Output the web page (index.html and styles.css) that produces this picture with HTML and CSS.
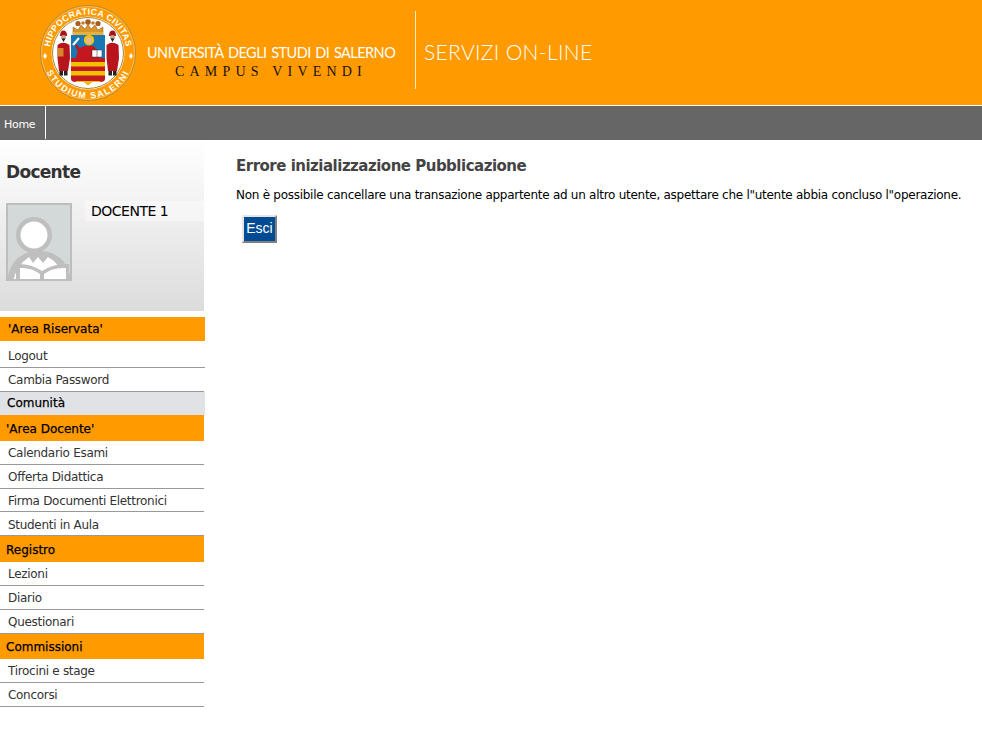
FILE: index.html
```html
<!DOCTYPE html>
<html lang="it">
<head>
<meta charset="utf-8">
<title>Errore inizializzazione Pubblicazione</title>
<link rel="stylesheet" href="styles.css">
</head>
<body>
<header class="top">
  <svg class="seal" viewBox="0 0 100 100" width="100" height="100" aria-label="Sigillo">
    <defs>
      <path id="arcTop" d="M11.710 54 A38.500 38.500 0 1 1 88.290 54"/>
      <path id="arcBot" d="M4.780 55 A45.500 45.500 0 0 0 95.220 55"/>
    </defs>
    <circle cx="50" cy="50" r="47.500" fill="#ff9a00" stroke="#b08a40" stroke-width="1"/>
    <circle cx="50" cy="50" r="46.500" fill="none" stroke="#ffd68a" stroke-width=".6"/>
    <circle cx="50" cy="50" r="36.500" fill="#fff"/>
    <circle cx="50" cy="50" r="35.500" fill="#fff" stroke="#a8842c" stroke-width="1"/>
    <text class="sealtext"><textPath href="#arcTop" startOffset="50%" text-anchor="middle">HIPPOCRATICA CIVITAS</textPath></text>
    <text class="sealtext sealbot"><textPath href="#arcBot" startOffset="50%" text-anchor="middle">STUDIUM SALERNI</textPath></text>
    <path d="M7 50 L9 53 L7 56 L5 53 Z M93 50 L95 53 L93 56 L91 53 Z" fill="#fff"/>
    <!-- crown -->
    <path d="M35 32 L35 24 L40 27 L43 22 L47 26 L50 21 L53 26 L57 22 L60 27 L65 24 L65 32 Z" fill="#d8962a" stroke="#8a5a10" stroke-width=".5"/>
    <circle cx="40" cy="20.500" r="2.600" fill="#a85c20"/>
    <circle cx="50" cy="19" r="2.800" fill="#a85c20"/>
    <circle cx="60" cy="20.500" r="2.600" fill="#a85c20"/>
    <circle cx="45" cy="20" r="1.800" fill="#c47a28"/>
    <circle cx="55" cy="20" r="1.800" fill="#c47a28"/>
    <rect x="35" y="29" width="30" height="3" fill="#e8b040"/>
    <!-- shield -->
    <path d="M33 32 H67 V76 Q67 79 62 79 H54 L50 82 L46 79 H38 Q33 79 33 76 Z" fill="#c3181f"/>
    <rect x="33" y="32" width="34" height="23" fill="#1878b4"/>
    <rect x="33" y="59" width="34" height="4.500" fill="#f2c200"/>
    <rect x="33" y="68" width="34" height="4.500" fill="#f2c200"/>
    <path d="M38 79 H46 L50 82 L54 79 H62 L62 78 H38 Z" fill="#f2c200"/>
    <!-- saint -->
    <circle cx="51" cy="37" r="5.200" fill="#f2c200"/>
    <circle cx="51" cy="37.500" r="3.300" fill="#e8b890"/>
    <path d="M38 55 L40 46 L46 43 H56 L59 47 L62 55 Z" fill="#c3181f"/>
    <path d="M41 47 L38 42" stroke="#c3181f" stroke-width="2.600"/>
    <path d="M35 42 L41 35" stroke="#fff" stroke-width="2"/>
    <path d="M54 47 H64 V54 H54 Z" fill="#fff" stroke="#333" stroke-width=".5"/>
    <path d="M59 47 V54" stroke="#333" stroke-width=".5"/>
    <!-- left figure -->
    <path d="M22 33 Q22 27.500 25.500 27.500 Q29 27.500 29 33 Z" fill="#a8141c"/>
    <circle cx="25.500" cy="34.500" r="2.400" fill="#caa080"/>
    <path d="M23.500 35.500 H27.500 L25.500 39 Z" fill="#222"/>
    <path d="M19.500 42 Q25 37.500 31.500 42 L32 55 L30 68 H21 L19.500 55 Z" fill="#b8141c"/>
    <rect x="21.500" y="68" width="3.500" height="4.500" fill="#222"/>
    <rect x="26" y="68" width="3.500" height="4.500" fill="#222"/>
    <rect x="20" y="45" width="5.500" height="8.500" fill="#d8862a"/>
    <!-- right figure -->
    <path d="M71 33 Q71 27.500 74.500 27.500 Q78 27.500 78 33 Z" fill="#a8141c"/>
    <circle cx="74.500" cy="34.500" r="2.400" fill="#caa080"/>
    <path d="M72.500 35.500 H76.500 L74.500 39 Z" fill="#222"/>
    <path d="M68.500 42 Q74 37.500 80.500 42 L81 55 L79 68 H70 L68.500 55 Z" fill="#b8141c"/>
    <rect x="70.500" y="68" width="3.500" height="4.500" fill="#222"/>
    <rect x="75" y="68" width="3.500" height="4.500" fill="#222"/>
  </svg>
  <div class="brand">
    <div class="uni">UNIVERSITÀ DEGLI STUDI DI SALERNO</div>
    <div class="motto">CAMPUS VIVENDI</div>
  </div>
  <div class="service">SERVIZI ON-LINE</div>
</header>
<nav class="navbar"><a class="navitem" href="#">Home</a></nav>
<div class="page">
  <aside class="side">
    <section class="profile">
      <h2 class="role">Docente</h2>
      <div class="person">
        <svg class="avatar" viewBox="0 0 66 78" width="66" height="78" aria-label="Avatar">
          <rect width="66" height="78" fill="#d3d9d9"/>
          <path d="M2 78 V72 Q6 56 20 50 Q33 45 46 50 Q60 56 64 72 V78 Z" fill="#bfbfbf"/>
          <path d="M7 78 Q11 62 23 54 L27 60 L32 54 L37 60 L42 54 Q54 60 59 78 Z" fill="#fff"/>
          <circle cx="28" cy="32" r="18" fill="#bfbfbf"/>
          <circle cx="28" cy="32" r="13.500" fill="#fff"/>
          <path d="M10 78 V61 Q24 60 36 68 Q48 60 63 61 V78 Z" fill="#bfbfbf"/>
          <path d="M14 78 V65 Q25 64 34 71 V78 Z M38 78 V71 Q47 64 60 65 V78 Z" fill="#fff"/>
        </svg>
        <div class="pname">DOCENTE 1</div>
      </div>
    </section>
    <div class="menu">
      <div class="head h-res">'Area Riservata'</div>
      <a class="item h-first" href="#">Logout</a>
      <a class="item" href="#">Cambia Password</a>
      <div class="sub">Comunità</div>
      <div class="head">'Area Docente'</div>
      <a class="item" href="#">Calendario Esami</a>
      <a class="item" href="#">Offerta Didattica</a>
      <a class="item h-short" href="#">Firma Documenti Elettronici</a>
      <a class="item h-low" href="#">Studenti in Aula</a>
      <div class="head">Registro</div>
      <a class="item" href="#">Lezioni</a>
      <a class="item" href="#">Diario</a>
      <a class="item" href="#">Questionari</a>
      <div class="head h-com">Commissioni</div>
      <a class="item" href="#">Tirocini e stage</a>
      <a class="item" href="#">Concorsi</a>
    </div>
  </aside>
  <main class="content">
    <h1 class="title">Errore inizializzazione Pubblicazione</h1>
    <p class="msg">Non è possibile cancellare una transazione appartente ad un altro utente, aspettare che l"utente abbia concluso l"operazione.</p>
    <button class="btn" type="button">Esci</button>
  </main>
</div>
</body>
</html>
```
FILE: styles.css
```css
* { box-sizing: border-box; }
html, body { margin: 0; padding: 0; }
body { width: 982px; height: 746px; overflow: hidden; background: #fff; font-family: "DejaVu Sans", sans-serif; color: #000; }

.top { height: 105px; background: #ff9a00; display: flex; align-items: flex-start; }
.seal { margin: 3px 0 0 38px; flex: none; }
.sealtext { font: 700 8.8px "Liberation Sans", sans-serif; fill: #fff; letter-spacing: .3px; }
.sealbot { letter-spacing: 1.5px; }
.brand { width: 268px; margin: 44px 0 0 9px; flex: none; height: 45px; }
.uni { font: 400 14.5px/18px "Lato", sans-serif; color: #fff; letter-spacing: -.55px; word-spacing: 1.5px; white-space: nowrap; }
.motto { font: 400 14px/17px "Liberation Serif", serif; color: #1a1206; letter-spacing: 5.2px; white-space: nowrap; margin: 1px 0 0 28px; }
.service { margin: 11px 0 0; height: 78px; border-left: 1px solid #ffe9c4; padding: 28px 0 0 8px; font: 300 21px/26px "Lato", sans-serif; color: #fff; letter-spacing: .35px; white-space: nowrap; }

.navbar { height: 35px; background: #666; border-top: 1px solid #fff; display: flex; }
.navitem { display: block; padding: 0 10px 0 4px; border-right: 1px solid #fff; color: #fff; text-decoration: none; font-size: 11px; line-height: 38px; height: 33px; letter-spacing: -.3px; }

.page { display: flex; }
.side { width: 205px; flex: none; }
.profile { width: 204px; height: 171px; background: linear-gradient(#fff, #dcdcdc); padding: 20px 0 0 6px; }
.role { margin: 0; font-size: 17px; line-height: 24px; font-weight: 700; color: #333; letter-spacing: -.7px; }
.person { display: flex; margin-top: 19px; align-items: flex-start; }
.avatar { flex: none; outline: 2px solid #bdbdbd; outline-offset: -2px; }
.pname { margin: -2px 0 0 13px; padding-left: 6px; width: 119px; height: 20px; font-size: 14px; line-height: 20px; letter-spacing: -.5px; color: #000; background: rgba(255, 255, 255, .4); }

.menu { margin-top: 6px; display: flex; flex-direction: column; }
.head { width: 204px; height: 26px; background: #ff9a00; font-size: 12px; padding-left: 6px; line-height: 29px; color: #000; -webkit-text-stroke: .25px #000; }
.h-res { width: 205px; height: 24px; padding-left: 8px; line-height: 25px; }
.h-com { height: 25px; line-height: 26px; }
.item { display: block; width: 204px; height: 24px; border-bottom: 1px solid #999; padding-left: 8px; font-size: 12px; line-height: 25px; color: #333; text-decoration: none; letter-spacing: -.3px; }
.h-first { height: 27px; line-height: 30px; width: 205px; }
.h-short { height: 23px; line-height: 25px; }
.h-low { line-height: 27px; }
.sub { width: 205px; height: 23px; background: #e0e2e6; padding-left: 7px; font-size: 12px; line-height: 23px; -webkit-text-stroke: .25px #000; }

.content { padding: 16px 0 0 31px; min-width: 0; flex: 1; }
.title { margin: 0; font-size: 15px; line-height: 20px; font-weight: 700; color: #444; letter-spacing: -.5px; white-space: nowrap; }
.msg { margin: 10px 0 0; font-size: 12px; line-height: 18px; color: #000; white-space: nowrap; letter-spacing: -.27px; }
.btn { display: block; margin: 11px 0 0 6px; width: 35px; height: 28px; padding: 0 0 2px; background: #004b93; color: #fff; font: 400 14px "Liberation Sans", sans-serif; border: 2px solid; border-color: #e6e6e6 #808080 #808080 #e6e6e6; }
```
